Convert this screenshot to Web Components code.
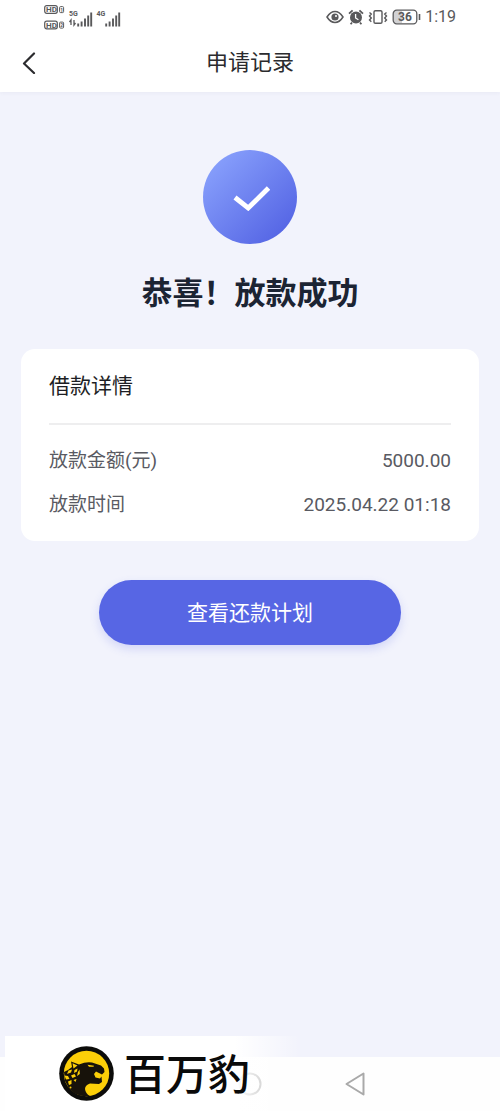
<!DOCTYPE html>
<html lang="zh-CN">
<head>
<meta charset="UTF-8">
<meta name="viewport" content="width=device-width, initial-scale=1">
<title>申请记录</title>
<style>
  body {
    margin: 0;
    background: #f2f3fc;
    font-family: Roboto, "Noto Sans CJK SC", sans-serif;
  }
</style>
</head>
<body>
<loan-page>
  <status-bar slot="top" time="1:19" battery="36"></status-bar>
  <nav-header slot="top">申请记录</nav-header>
  <result-hero>恭喜！放款成功</result-hero>
  <detail-card heading="借款详情">
    <detail-row label="放款金额(元)">5000.00</detail-row>
    <detail-row label="放款时间">2025.04.22 01:18</detail-row>
  </detail-card>
  <pill-button>查看还款计划</pill-button>
  <system-nav slot="bottom"></system-nav>
  <brand-mark slot="bottom">百万豹</brand-mark>
</loan-page>

<script>
// Attaches an open shadow root and fills it
const mount = (el, html) => {
  el.attachShadow({ mode: 'open' }).innerHTML = html;
};

// Page frame: top bars, content, bottom bars
class LoanPage extends HTMLElement {
  connectedCallback() {
    mount(this, `
      <style>
        :host {
          display: flex;
          flex-direction: column;
          min-height: 100vh;
          position: relative;
        }
        header {
          background: #fff;
          box-shadow: 0 1px 4px rgba(60, 60, 100, 0.05);
        }
        main {
          flex: 1;
          display: flex;
          flex-direction: column;
          align-items: center;
          padding: 58px 21px 40px;
        }
      </style>
      <header><slot name="top"></slot></header>
      <main><slot></slot></main>
      <footer><slot name="bottom"></slot></footer>
    `);
  }
}

// Phone status bar
class StatusBar extends HTMLElement {
  connectedCallback() {
    const time = this.getAttribute('time') || '';
    const battery = this.getAttribute('battery') || '';
    mount(this, `
      <style>
        :host {
          display: flex;
          justify-content: space-between;
          align-items: center;
          height: 34px;
          padding: 0 44px;
          color: #59595b;
        }
        .right {
          display: flex;
          align-items: center;
          gap: 4px;
        }
        svg { display: block; }
        text { font-family: Roboto, sans-serif; font-weight: 700; fill: currentColor; }
        .time { font-size: 16px; line-height: 20px; }
      </style>
      <svg width="78" height="28" viewBox="0 0 78 28" fill="none" stroke="currentColor">
        <rect x="0.7" y="2.7" width="12.6" height="7.6" rx="2" stroke-width="1.2"/>
        <text x="2" y="9.4" font-size="8" stroke="none">HD</text>
        <rect x="15.6" y="3.6" width="4" height="6" rx="1"/>
        <text x="16.2" y="8.8" font-size="5" stroke="none">1</text>
        <rect x="0.7" y="18.2" width="12.6" height="7.6" rx="2" stroke-width="1.2"/>
        <text x="2" y="24.9" font-size="8" stroke="none">HD</text>
        <rect x="15.6" y="19.1" width="4" height="6" rx="1"/>
        <text x="16.2" y="24.3" font-size="5" stroke="none">2</text>
        <text x="25" y="13" font-size="7" stroke="none">5G</text>
        <path d="M27 22v-5l-1.5 2M30 17v5l1.5-2" stroke-width="1.3"/>
        <path d="M34.2 23.5v-3M37.6 23.5v-5M41 23.5v-8M44.2 23.5v-11M47.2 23.5v-14" stroke-width="1.9"/>
        <text x="52.5" y="13" font-size="7" stroke="none">4G</text>
        <path d="M62.2 23.5v-3M65.6 23.5v-5M69 23.5v-8M72.2 23.5v-11M75.2 23.5v-14" stroke-width="1.9"/>
      </svg>
      <div class="right">
        <svg width="18" height="14" viewBox="0 0 18 14" fill="none" stroke="currentColor" stroke-width="1.5">
          <path d="M1 7Q4.500 1.500 9 1.500T17 7Q13.500 12.500 9 12.500T1 7Z"/>
          <circle cx="9" cy="7" r="3.6" fill="currentColor" stroke="none"/>
          <circle cx="10" cy="6" r="1" fill="#fff" stroke="none"/>
        </svg>
        <svg width="16" height="16" viewBox="0 0 16 16" fill="none">
          <circle cx="8" cy="8.500" r="6" fill="currentColor"/>
          <path d="M1 4.600 4.600 1.300M15 4.600 11.400 1.300M4 13.500l-1.400 1.700M12 13.500l1.400 1.700" stroke="currentColor" stroke-width="1.8"/>
          <path d="M7.600 5v4l2.800 1.800" stroke="#fff" stroke-width="1.3"/>
        </svg>
        <svg width="20" height="16" viewBox="0 0 20 16" fill="none" stroke="currentColor" stroke-width="1.4">
          <rect x="6" y="1.700" width="8" height="12.600" rx="1.400"/>
          <path d="M1.500 3.500 3.300 5 1.500 7 3.300 9 1.500 11l1.800 1.800M18.500 3.500 16.700 5l1.800 2-1.800 2 1.800 2-1.800 1.800"/>
        </svg>
        <svg width="29" height="16" viewBox="0 0 29 16" fill="none">
          <path d="M4 2h6v12H4q-2 0-2-2V4q0-2 2-2Z" fill="#d2d2d4"/>
          <rect x="1.200" y="1.200" width="23.600" height="13.600" rx="3.500" stroke="currentColor" stroke-width="1.300"/>
          <text x="13" y="12.400" font-size="12" text-anchor="middle">${battery}</text>
          <path d="M27.500 5v6" stroke="currentColor" stroke-width="1.600"/>
        </svg>
        <span class="time">${time}</span>
      </div>
    `);
  }
}

// Title bar with back button
class NavHeader extends HTMLElement {
  connectedCallback() {
    mount(this, `
      <style>
        :host {
          display: grid;
          grid-template-columns: 58px 1fr 58px;
          align-items: center;
          height: 58px;
          color: #2b2b2e;
        }
        button {
          display: flex;
          align-items: center;
          justify-content: center;
          height: 44px;
          padding: 0;
          border: 0;
          background: none;
          color: inherit;
        }
        h1 {
          margin: 0;
          font-size: 22px;
          line-height: 32px;
          font-weight: 400;
          text-align: center;
        }
      </style>
      <button type="button" aria-label="返回">
        <svg width="14" height="22" viewBox="0 0 14 22" fill="none" stroke="currentColor" stroke-width="2.200" stroke-linecap="round" stroke-linejoin="round">
          <path d="M12 1.500 2 11.500 12 21"/>
        </svg>
      </button>
      <h1><slot></slot></h1>
    `);
  }
}

// Success badge and headline
class ResultHero extends HTMLElement {
  connectedCallback() {
    mount(this, `
      <style>
        :host {
          display: flex;
          flex-direction: column;
          align-items: center;
          gap: 28px;
          color: #1c2433;
        }
        .badge {
          display: flex;
          align-items: center;
          justify-content: center;
          width: 94px;
          height: 94px;
          border-radius: 50%;
          background: linear-gradient(135deg, #88a0fc 10%, #5464e4 90%);
        }
        h2 {
          margin: 0;
          font-size: 31px;
          line-height: 44px;
          font-weight: 700;
        }
      </style>
      <div class="badge">
        <svg width="40" height="28" viewBox="0 0 40 28" fill="none" stroke="#fff" stroke-width="4.800">
          <path d="M5 14.500 18.200 25 38.500 5"/>
        </svg>
      </div>
      <h2><slot></slot></h2>
    `);
  }
}

// White card with heading and rows
class DetailCard extends HTMLElement {
  connectedCallback() {
    const heading = this.getAttribute('heading') || '';
    mount(this, `
      <style>
        :host {
          display: block;
          box-sizing: border-box;
          width: 100%;
          margin-top: 33px;
          padding: 21px 28px 14px;
          border-radius: 14px;
          background: #fff;
        }
        h3 {
          margin: 0 0 14px;
          padding-bottom: 21px;
          border-bottom: 2px solid #eeeeef;
          font-size: 21px;
          line-height: 32px;
          font-weight: 400;
          color: #1d1e24;
        }
        dl { margin: 0; }
      </style>
      <h3>${heading}</h3>
      <dl><slot></slot></dl>
    `);
  }
}

// Label and value line
class DetailRow extends HTMLElement {
  connectedCallback() {
    const label = this.getAttribute('label') || '';
    mount(this, `
      <style>
        :host {
          display: flex;
          justify-content: space-between;
          font-size: 19px;
          line-height: 44px;
          color: #595a62;
        }
        dt, dd { margin: 0; }
      </style>
      <dt>${label}</dt>
      <dd><slot></slot></dd>
    `);
  }
}

// Main action
class PillButton extends HTMLElement {
  connectedCallback() {
    mount(this, `
      <style>
        :host {
          display: block;
          width: 66%;
          margin-top: 39px;
        }
        button {
          width: 100%;
          height: 65px;
          padding: 0 0 4px;
          border: 0;
          border-radius: 33px;
          background: #5766e4;
          box-shadow: 0 4px 10px rgba(87, 102, 228, 0.2);
          color: #fff;
          font: inherit;
          font-size: 21px;
        }
      </style>
      <button type="button"><slot></slot></button>
    `);
  }
}

// Android navigation strip
class SystemNav extends HTMLElement {
  connectedCallback() {
    mount(this, `
      <style>
        :host {
          display: grid;
          grid-template-columns: 31% 38% 31%;
          align-items: center;
          height: 54px;
          background: #fefefe;
        }
        button {
          justify-self: center;
          display: flex;
          padding: 0;
          border: 0;
          background: none;
        }
        .home { grid-column: 2; }
        .back { justify-self: start; }
      </style>
      <button class="home" type="button" aria-label="主页">
        <svg width="24" height="24" viewBox="0 0 24 24" fill="none" stroke="#a0a0a0" stroke-width="2">
          <circle cx="12" cy="12" r="10.500"/>
        </svg>
      </button>
      <button class="back" type="button" aria-label="返回">
        <svg width="20" height="24" viewBox="0 0 20 24" fill="none" stroke="#a9a9a9" stroke-width="2" stroke-linejoin="round">
          <path d="M18.500 1.500v21L1.500 12Z"/>
        </svg>
      </button>
    `);
  }
}

// Brand overlay in the bottom left corner
class BrandMark extends HTMLElement {
  connectedCallback() {
    mount(this, `
      <style>
        :host {
          position: absolute;
          left: 5px;
          bottom: 0;
          display: flex;
          align-items: center;
          gap: 10px;
          box-sizing: border-box;
          width: 295px;
          height: 75px;
          padding-left: 54px;
          background: linear-gradient(90deg, #fff 78%, rgba(255, 255, 255, 0));
          color: #0a0a0a;
        }
        span {
          font-family: "Noto Sans CJK SC", sans-serif;
          font-size: 42px;
          line-height: 54px;
          font-weight: 500;
          padding-bottom: 4px;
        }
      </style>
      <svg width="55" height="55" viewBox="0 0 55 55">
        <circle cx="27.500" cy="27.500" r="27.300" fill="#0c0c0a"/>
        <circle cx="27.500" cy="27.500" r="22.700" fill="#fccf08"/>
        <path fill="#17120a" d="M12 15.500 20 18.500Q27 15.500 33 16.500L42 19.500 45 22.500 45.500 26 43 28.500 37 25.500 35 28 36.500 31.500 41 32.500 42.500 30.500 43 36 40 38 31 37.500Q26 39 26 43 26.500 47.500 31 50Q18 52 10 42.500L6 35 5 26 9 24 13 21Z"/>
        <path fill="#fccf08" d="M13.500 17.200 18.500 19.500 14.500 22.500ZM28.500 18.800 35 19.700 34.500 20.800 30 20.700Z"/>
        <g fill="#fccf08">
          <path d="M9.500 24.500 13 23.500 12 26.500 8 28Z"/>
          <path d="M15.500 24 18.500 22.500 18 25.500 15 27Z"/>
          <path d="M19 26 20.500 23.500 20.800 28 18 30Z"/>
          <path d="M5.500 29.500 9 30 10.500 33 7 33.500Z"/>
          <path d="M12 29.500 15.500 28 17 30.500 13.500 32Z"/>
          <path d="M9 35.500 12.500 34 12.500 38 10 39Z"/>
          <path d="M14.500 34 17.500 33 16.500 36Z"/>
          <circle cx="11.500" cy="41.500" r="1"/>
        </g>
      </svg>
      <span><slot></slot></span>
    `);
  }
}

customElements.define('loan-page', LoanPage);
customElements.define('status-bar', StatusBar);
customElements.define('nav-header', NavHeader);
customElements.define('result-hero', ResultHero);
customElements.define('detail-card', DetailCard);
customElements.define('detail-row', DetailRow);
customElements.define('pill-button', PillButton);
customElements.define('system-nav', SystemNav);
customElements.define('brand-mark', BrandMark);
</script>
</body>
</html>
